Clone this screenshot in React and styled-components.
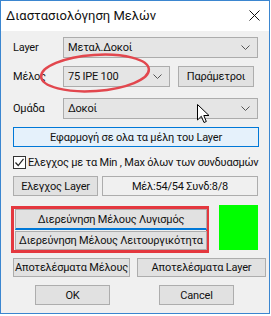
import styled, { createGlobalStyle } from "styled-components";

const Global = createGlobalStyle`
  html, body {
    margin: 0;
    padding: 0;
    background: #FFF;
  }
  * {
    box-sizing: border-box;
  }
`;

const Window = styled.div`
  position: relative;
  width: 270px;
  height: 314px;
  border: 1px solid #3B86D0;
  background: #F0F0F0;
  font-family: Roboto, "Noto Sans", sans-serif;
  font-size: 11px;
  letter-spacing: -0.2px;
  color: #111;
  display: flex;
  flex-direction: column;
  white-space: nowrap;
`;

const TitleBar = styled.div`
  height: 30px;
  background: #FFF;
  display: flex;
  align-items: center;
  justify-content: space-between;
  padding: 0 9px 2px 5px;
  font-size: 13px;
  letter-spacing: 0;
  flex-shrink: 0;
`;

const Body = styled.div`
  display: flex;
  flex-direction: column;
  padding: 0 0 0 11px;
`;

const Row = styled.div`
  display: flex;
  align-items: ${(p) => p.$align || "center"};
  gap: ${(p) => p.$gap || 0}px;
  margin-top: ${(p) => p.$top || 0}px;
  margin-left: ${(p) => p.$left || 0}px;
`;

const Label = styled.div`
  width: 51px;
  padding-left: 1px;
`;

const Combo = styled.div`
  width: ${(p) => p.$w}px;
  height: 21px;
  background: #E5E5E5;
  border: 1px solid #ACACAC;
  display: flex;
  align-items: center;
  justify-content: space-between;
  padding: 0 7px 0 4px;
`;

const Button = styled.div`
  width: ${(p) => p.$w}px;
  height: ${(p) => p.$h || 20}px;
  background: #E1E1E1;
  border: 1px solid #ADADAD;
  display: flex;
  align-items: center;
  justify-content: center;
`;

const ApplyButton = styled(Button)`
  background: #E5F1FB;
  border-color: #0078D7;
`;

const StaticBox = styled.div`
  width: ${(p) => p.$w}px;
  height: 20px;
  border: 1px solid #ADADAD;
  display: flex;
  align-items: center;
  justify-content: center;
`;

const Check = styled.div`
  width: 13px;
  height: 13px;
  background: #FFF;
  border: 1px solid #333;
  display: flex;
  align-items: center;
  justify-content: center;
  margin-right: 2px;
`;

const RedFrame = styled.div`
  width: 198px;
  border: 3px solid #E4383F;
  display: flex;
  flex-direction: column;
  gap: 1px;
  padding: 0 0 0 1px;
`;

const FocusButton = styled(Button)`
  border-bottom: 2px solid #0078D7;
`;

const Swatch = styled.div`
  width: 39px;
  height: 45px;
  background: #00FF00;
  margin-top: -1px;
`;

const Overlay = styled.svg`
  position: absolute;
  left: -1px;
  top: -1px;
  pointer-events: none;
`;

const Chevron = () => (
  <svg width="9" height="5" viewBox="0 0 9 5">
    <path d="M0.5 0.5 L4.5 4.5 L8.5 0.5" fill="none" stroke="#555" strokeWidth="1" />
  </svg>
);

export default function App() {
  return (
    <>
      <Global />
      <Window>
        <TitleBar>
          <span>Διαστασιολόγηση Μελών</span>
          <svg width="11" height="11" viewBox="0 0 11 11">
            <path d="M0.5 0.5 L10.5 10.5 M10.5 0.5 L0.5 10.5" stroke="#111" strokeWidth="1" />
          </svg>
        </TitleBar>
        <Body>
          <Row $top={6}>
            <Label>Layer</Label>
            <Combo $w={195}>
              <span>Μεταλ.Δοκοί</span>
              <Chevron />
            </Combo>
          </Row>
          <Row $top={8} $gap={8}>
            <Row>
              <Label>Μέλος</Label>
              <Combo $w={107}>
                <span>75 IPE 100</span>
                <Chevron />
              </Combo>
            </Row>
            <Button $w={76} $h={21}>Παράμετροι</Button>
          </Row>
          <Row $top={11}>
            <Label>Ομάδα</Label>
            <Combo $w={195}>
              <span>Δοκοί</span>
              <Chevron />
            </Combo>
          </Row>
          <Row $top={8} $left={1}>
            <ApplyButton $w={246}>Εφαρμογή σε ολα τα μέλη του Layer</ApplyButton>
          </Row>
          <Row $top={9} $left={1}>
            <Check>
              <svg width="11" height="11" viewBox="0 0 11 11">
                <path d="M1.5 5.5 L4.2 8.5 L9.5 1.8" fill="none" stroke="#222" strokeWidth="1.2" />
              </svg>
            </Check>
            <span>Ελεγχος με τα Min , Max όλων των συνδυασμών</span>
          </Row>
          <Row $top={7} $left={1} $gap={4}>
            <Button $w={85}>Ελεγχος Layer</Button>
            <StaticBox $w={156}>Μέλ:54/54 Συνδ:8/8</StaticBox>
          </Row>
          <Row $top={10} $left={-1} $gap={10} $align="flex-start">
            <RedFrame>
              <FocusButton $w={192} $h={21}>Διερεύνηση Μέλους Λυγισμός</FocusButton>
              <Button $w={192} $h={19}>Διερεύνηση Μέλους Λειτουργικότητα</Button>
            </RedFrame>
            <Swatch />
          </Row>
          <Row $top={5} $left={1} $gap={7}>
            <Button $w={117} $h={19}>Αποτελέσματα Μέλους</Button>
            <Button $w={129} $h={19}>Αποτελέσματα Layer</Button>
          </Row>
          <Row $top={8} $left={23} $gap={49}>
            <Button $w={75}>OK</Button>
            <Button $w={75}>Cancel</Button>
          </Row>
        </Body>
        <Overlay width="271" height="316" viewBox="0 0 271 316">
          <ellipse
            cx="95"
            cy="73"
            rx="54"
            ry="18"
            transform="rotate(-4 95 73)"
            fill="none"
            stroke="#E2474E"
            strokeWidth="2.5"
          />
          <path
            d="M197.5 104.5 L197.5 120 L201.3 116.3 L204 122.5 L206.3 121.5 L203.8 115.5 L209 115.5 Z"
            fill="#FFF"
            stroke="#000"
            strokeWidth="1"
            strokeLinejoin="round"
          />
        </Overlay>
      </Window>
    </>
  );
}
